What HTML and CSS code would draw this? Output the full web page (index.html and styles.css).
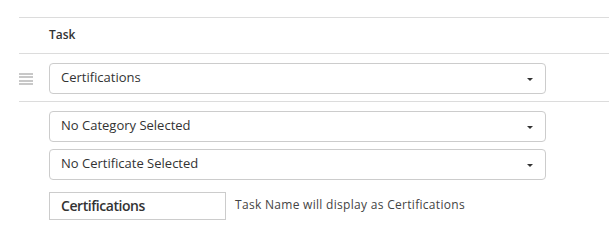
FILE: index.html
```html
<!DOCTYPE html>
<html>
<head>
<meta charset="utf-8">
<link rel="stylesheet" href="styles.css">
</head>
<body>
<div class="table">
  <div class="row head-row">
    <div class="handle-col"></div>
    <div class="head-cell">Task</div>
  </div>
  <div class="row task-row">
    <div class="handle-col">
      <span class="handle"><i></i><i></i><i></i><i></i></span>
    </div>
    <div class="select"><span class="select-text">Certifications</span><span class="caret"></span></div>
  </div>
  <div class="row detail-row">
    <div class="handle-col"></div>
    <div class="detail">
      <div class="select"><span class="select-text">No Category Selected</span><span class="caret"></span></div>
      <div class="select"><span class="select-text">No Certificate Selected</span><span class="caret"></span></div>
      <div class="name-line">
        <div class="name-input">Certifications</div>
        <span class="hint">Task Name will display as Certifications</span>
      </div>
    </div>
  </div>
</div>
</body>
</html>
```
FILE: styles.css
```css
* { box-sizing: border-box; }
html, body { margin: 0; padding: 0; background: #fff; }
body {
  font-family: "Open Sans", "DejaVu Sans", sans-serif;
  color: #333;
  width: 609px;
  height: 246px;
  overflow: hidden;
}
.table {
  margin-top: 17px;
  margin-left: 19px;
}
.row {
  display: flex;
  border-top: 1px solid #dcdcdc;
}
.handle-col {
  width: 30px;
  flex: none;
  display: flex;
  align-items: center;
}
.head-row {
  height: 36px;
  align-items: center;
}
.head-cell {
  font-size: 12px;
  font-weight: 600;
  color: #333;
  padding-bottom: 2px;
}
.task-row {
  padding: 9px 0 7px;
  height: 48px;
}
.handle {
  display: flex;
  flex-direction: column;
  gap: 1.4px;
  width: 14px;
  margin-top: 1px;
}
.handle i {
  display: block;
  height: 2px;
  background: #c8c8c8;
}
.select {
  width: 497px;
  height: 31px;
  border: 1px solid #cccccc;
  border-radius: 4px;
  display: flex;
  align-items: center;
  justify-content: space-between;
  padding: 0 11px 0 11px;
  font-size: 13px;
  color: #333;
}
.select-text {
  position: relative;
  top: -2px;
}
.caret {
  width: 0;
  height: 0;
  border-top: 3.5px solid #333;
  border-left: 3px solid transparent;
  border-right: 3px solid transparent;
  margin-right: 1px;
  margin-top: 1px;
}
.detail-row {
  padding-top: 9px;
}
.detail {
  display: flex;
  flex-direction: column;
  gap: 7px;
}
.name-line {
  display: flex;
  align-items: center;
  gap: 9px;
  margin-top: 5px;
}
.name-input {
  width: 177px;
  height: 28px;
  border: 1px solid #cccccc;
  padding: 0 11px 2px;
  display: flex;
  align-items: center;
  font-size: 14px;
  font-weight: 600;
  letter-spacing: -0.45px;
  color: #333;
}
.hint {
  font-size: 12px;
  letter-spacing: 0.3px;
  color: #444;
  position: relative;
  top: -2px;
}
```
